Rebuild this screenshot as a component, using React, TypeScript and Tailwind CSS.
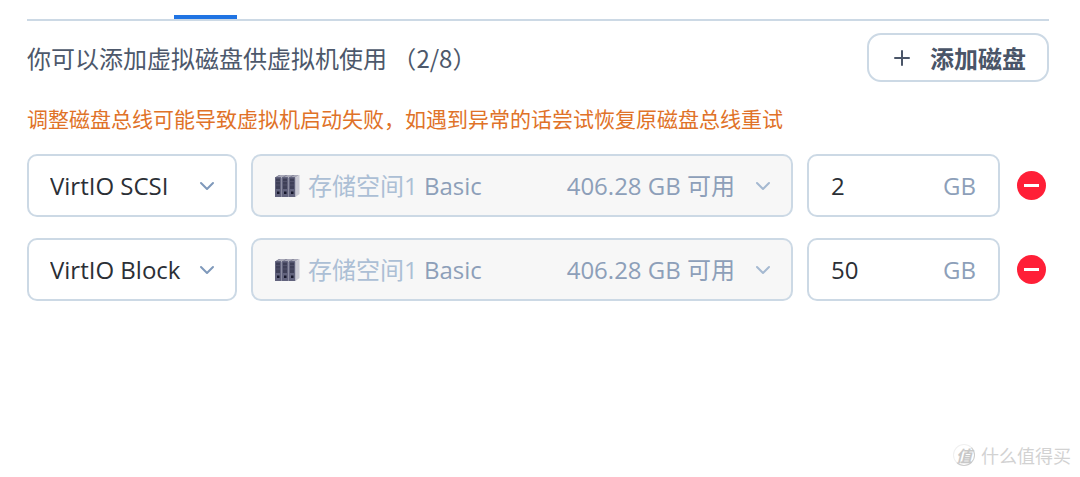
import { useState } from 'react';
import { ChevronDown, Plus } from 'lucide-react';

const initialDisks = [
  { id: 1, bus: 'VirtIO SCSI', size: '2' },
  { id: 2, bus: 'VirtIO Block', size: '50' },
];

const buses = ['VirtIO SCSI', 'VirtIO Block'];

function StorageIcon() {
  return (
    <svg className="h-6 w-[26px] shrink-0" viewBox="0 0 26 24" aria-hidden="true">
      <path d="M1 3.5 5.500 1H25.500L21.500 3.500z" fill="#a9a9b8" />
      <path d="M21.500 3.500 25.500 1v19L21.500 23z" fill="#cbcbd5" />
      <rect x="1" y="3.500" width="20.500" height="19.500" fill="#8c8da1" />
      {[1, 8, 15].map((x) => (
        <g key={x}>
          <path d={`M${x} 3.500 l4 -2.500 h1.500 l-4 2.500z`} fill="#7d7e93" />
          <rect x={x} y="3" width="6" height="20" rx="0.500" fill="#62637d" />
          <rect x={x + 1} y="4.500" width="4" height="10.500" fill="#3f4058" />
          <path
            d={`M${x + 1} 7.500h4M${x + 1} 11h4`}
            stroke="#55566f"
            strokeWidth="0.800"
          />
          <rect x={x + 2} y="17.500" width="2.500" height="2.500" fill="#17182c" />
        </g>
      ))}
    </svg>
  );
}

function Chevron({ className = '' }: { className?: string }) {
  return (
    <ChevronDown
      className={`pointer-events-none h-6 w-6 shrink-0 ${className}`}
      strokeWidth={2}
      aria-hidden="true"
    />
  );
}

export default function App() {
  const [disks, setDisks] = useState(initialDisks);

  const updateDisk = (id: number, values: { bus?: string; size?: string }) => {
    setDisks(disks.map((d) => (d.id === id ? { ...d, ...values } : d)));
  };

  const addDisk = () => {
    if (disks.length >= 8) return;
    setDisks([...disks, { id: Date.now(), bus: buses[0], size: '50' }]);
  };

  return (
    <main className="relative min-h-screen bg-white pr-[31px] pl-[27px] pt-[15px] font-['Open_Sans','Noto_Sans_CJK_SC',sans-serif] text-2xl leading-8">
      <div className="border-b-2 border-[#ccd9e5]">
        <div className="ml-[147px] h-1 w-[63px] bg-[#2074e3]" />
      </div>

      <div className="mt-3 flex items-center justify-between">
        <h1 className="font-['Noto_Sans_CJK_SC',sans-serif] text-2xl text-[#4d586b]">
          你可以添加虚拟磁盘供虚拟机使用 （{disks.length}/8）
        </h1>
        <button
          type="button"
          onClick={addDisk}
          className="flex h-[49px] items-center gap-4 rounded-[14px] border-2 border-[#ccd9e5] px-[21px] font-['Noto_Sans_CJK_SC',sans-serif] text-2xl font-bold text-[#4a5568]"
        >
          <Plus className="h-6 w-6" strokeWidth={2} aria-hidden="true" />
          添加磁盘
        </button>
      </div>

      <p className="mt-5 font-['Noto_Sans_CJK_SC',sans-serif] text-[21px] text-[#e07228]">
        调整磁盘总线可能导致虚拟机启动失败，如遇到异常的话尝试恢复原磁盘总线重试
      </p>

      <ul className="mt-5 space-y-[21px]">
        {disks.map((disk) => (
          <li key={disk.id} className="flex items-center gap-[14px]">
            <div className="grid w-[210px] shrink-0 items-center">
              <select
                aria-label="磁盘总线"
                value={disk.bus}
                onChange={(e) => updateDisk(disk.id, { bus: e.target.value })}
                className="col-start-1 row-start-1 h-[63px] w-full appearance-none rounded-[10px] border-2 border-[#ccd9e5] bg-white pl-[21px] text-[#2b2f36]"
              >
                {buses.map((bus) => (
                  <option key={bus}>{bus}</option>
                ))}
              </select>
              <Chevron className="col-start-1 row-start-1 mr-[18px] justify-self-end text-[#7f99bb]" />
            </div>

            <label className="flex h-[63px] min-w-0 flex-1 items-center rounded-[10px] border-2 border-[#ccd9e5] bg-[#f7f7f7] pr-4 pl-[21px] text-[#8d9fb9]">
              <StorageIcon />
              <select
                disabled
                aria-label="存储空间"
                className="ml-2 appearance-none text-[#acbfd5] opacity-100"
              >
                <option>存储空间1</option>
              </select>
              <span className="ml-1.5">Basic</span>
              <span className="ml-auto">406.28 GB 可用</span>
              <Chevron className="ml-4 text-[#a5b9d1]" />
            </label>

            <label className="flex h-[63px] w-[193px] shrink-0 items-center rounded-[10px] border-2 border-[#ccd9e5] px-[22px]">
              <input
                type="text"
                inputMode="numeric"
                aria-label="磁盘大小"
                value={disk.size}
                onChange={(e) => updateDisk(disk.id, { size: e.target.value })}
                className="min-w-0 flex-1 text-[#2b2f36] outline-none"
              />
              <span className="text-[#8d9fb9]">GB</span>
            </label>

            <button
              type="button"
              aria-label="删除磁盘"
              onClick={() => setDisks(disks.filter((d) => d.id !== disk.id))}
              className="mx-[3px] flex h-[29px] w-[29px] shrink-0 items-center justify-center rounded-full bg-[#ff1f37]"
            >
              <span className="h-[3px] w-[15px] bg-white" />
            </button>
          </li>
        ))}
      </ul>

      <div className="absolute right-[9px] bottom-[10px] flex items-center gap-1.5 font-['Noto_Sans_CJK_SC',sans-serif] text-lg leading-6 text-[#d2d2d2]">
        <span className="flex h-[22px] w-[22px] items-center justify-center rounded-full border border-t-[#f0f0f0] border-r-[#cccccc] border-b-[#cccccc] border-l-[#f0f0f0] text-base font-bold text-[#c8c8c8] italic">
          值
        </span>
        <span>什么值得买</span>
      </div>
    </main>
  );
}
